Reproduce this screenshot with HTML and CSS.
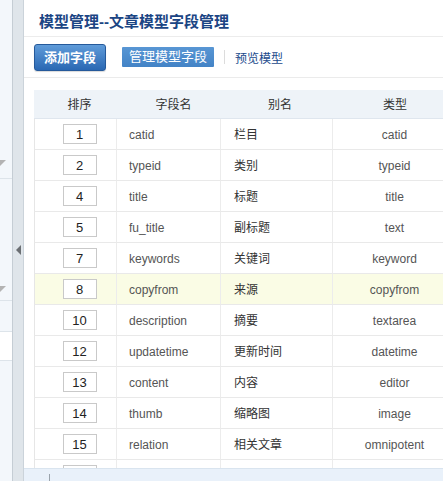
FILE: index.html
```html
<!DOCTYPE html>
<html lang="zh-CN">
<head>
<meta charset="utf-8">
<title>模型管理--文章模型字段管理</title>
<link rel="stylesheet" href="styles.css">
</head>
<body>
<div class="app">
  <aside class="side">
    <div class="sec sec1"><span class="tri"></span></div>
    <div class="sec sec2"><span class="tri"></span></div>
    <div class="sec sec3"></div>
    <div class="sec sec4"></div>
    <div class="sec sec5"></div>
  </aside>
  <div class="splitter"><span class="arrow"></span></div>
  <main class="main">
    <h1 class="title">模型管理--文章模型字段管理</h1>
    <div class="toolbar">
      <a class="btn-primary">添加字段</a>
      <a class="btn-tab">管理模型字段</a>
      <span class="sep"></span>
      <a class="link">预览模型</a>
    </div>
    <div class="table-wrap">
      <table class="fields">
        <colgroup>
          <col class="c1"><col class="c2"><col class="c3"><col class="c4">
        </colgroup>
        <thead>
          <tr><th class="h1">排序</th><th class="h2">字段名</th><th class="h3">别名</th><th class="h4">类型</th></tr>
        </thead>
        <tbody>
          <tr><td class="ord"><input class="order" value="1"></td><td class="name">catid</td><td class="alias">栏目</td><td class="type">catid</td></tr>
          <tr><td class="ord"><input class="order" value="2"></td><td class="name">typeid</td><td class="alias">类别</td><td class="type">typeid</td></tr>
          <tr><td class="ord"><input class="order" value="4"></td><td class="name">title</td><td class="alias">标题</td><td class="type">title</td></tr>
          <tr><td class="ord"><input class="order" value="5"></td><td class="name">fu_title</td><td class="alias">副标题</td><td class="type">text</td></tr>
          <tr><td class="ord"><input class="order" value="7"></td><td class="name">keywords</td><td class="alias">关键词</td><td class="type">keyword</td></tr>
          <tr class="hl"><td class="ord"><input class="order" value="8"></td><td class="name">copyfrom</td><td class="alias">来源</td><td class="type">copyfrom</td></tr>
          <tr><td class="ord"><input class="order" value="10"></td><td class="name">description</td><td class="alias">摘要</td><td class="type">textarea</td></tr>
          <tr><td class="ord"><input class="order" value="12"></td><td class="name">updatetime</td><td class="alias">更新时间</td><td class="type">datetime</td></tr>
          <tr><td class="ord"><input class="order" value="13"></td><td class="name">content</td><td class="alias">内容</td><td class="type">editor</td></tr>
          <tr><td class="ord"><input class="order" value="14"></td><td class="name">thumb</td><td class="alias">缩略图</td><td class="type">image</td></tr>
          <tr><td class="ord"><input class="order" value="15"></td><td class="name">relation</td><td class="alias">相关文章</td><td class="type">omnipotent</td></tr>
          <tr><td class="ord"><input class="order" value=""></td><td class="name"></td><td class="alias"></td><td class="type"></td></tr>
        </tbody>
      </table>
    </div>
    <div class="footer"><span class="tick"></span></div>
  </main>
</div>
</body>
</html>
```

FILE: styles.css
```css
html, body {
  margin: 0;
  padding: 0;
  height: 100%;
  overflow: hidden;
}
body {
  font-family: "Liberation Sans", "Noto Sans CJK SC", sans-serif;
  font-size: 12px;
  color: #444;
  background: #fff;
}
.app {
  display: flex;
  height: 481px;
}

/* left collapsed panel */
.side {
  width: 12px;
  flex: none;
  background: #f3f7fb;
  border-right: 1px solid #c5cdd4;
  display: flex;
  flex-direction: column;
  overflow: hidden;
}
.sec {
  box-sizing: border-box;
  flex: none;
  display: flex;
  flex-direction: column;
  justify-content: flex-end;
}
.sec1 { height: 179px; border-bottom: 1px solid #dde4ea; padding-bottom: 12px; }
.sec2 { height: 122px; border-bottom: 1px solid #dde4ea; padding-bottom: 8px; }
.sec3 { height: 31px; border-bottom: 1px solid #dde4ea; }
.sec4 { height: 29px; background: #fff; border-bottom: 1px solid #dde4ea; }
.sec5 { flex: 1; }
.tri {
  width: 0;
  height: 0;
  margin-left: -6px;
  border-left: 6px solid transparent;
  border-right: 6px solid transparent;
  border-top: 6px solid #b3b3b3;
}

/* splitter */
.splitter {
  width: 11px;
  flex: none;
  background: #dfe5ea;
  border-right: 1px solid #cbd3da;
  display: flex;
  align-items: center;
  justify-content: center;
  padding-top: 19px;
  box-sizing: border-box;
}
.arrow {
  width: 0;
  height: 0;
  border-top: 5px solid transparent;
  border-bottom: 5px solid transparent;
  border-right: 5px solid #6b6f73;
}

/* main */
.main {
  flex: 1;
  min-width: 0;
  display: flex;
  flex-direction: column;
  overflow: hidden;
  background: #fff;
}
.title {
  margin: 0;
  box-sizing: border-box;
  height: 37px;
  padding: 12px 0 0 15px;
  line-height: 20px;
  font-size: 15px;
  font-weight: bold;
  color: #1b4584;
  border-bottom: 1px solid #ececec;
  white-space: nowrap;
}
.toolbar {
  box-sizing: border-box;
  height: 41px;
  flex: none;
  display: flex;
  align-items: center;
  padding-left: 10px;
  border-bottom: 1px solid #ebebeb;
}
.btn-primary {
  box-sizing: border-box;
  width: 72px;
  height: 27px;
  line-height: 25px;
  text-align: center;
  color: #fff;
  font-size: 13px;
  font-weight: bold;
  background: linear-gradient(#5f9bd9, #2a68b3);
  border: 1px solid #25599a;
  border-radius: 3px;
  box-shadow: 0 1px 1px rgba(0,0,0,0.15);
}
.btn-tab {
  margin-left: 16px;
  box-sizing: border-box;
  width: 92px;
  height: 20px;
  line-height: 20px;
  text-align: center;
  color: #fff;
  font-size: 13px;
  background: linear-gradient(#5896d4, #4383c6);
  border-radius: 1px;
}
.sep {
  width: 1px;
  height: 14px;
  margin-left: 10px;
  background: #dcdcdc;
}
.link {
  margin-left: 10px;
  font-size: 12px;
  color: #1a4a8c;
}

.table-wrap {
  flex: 1;
  min-height: 0;
  overflow: hidden;
  padding: 12px 0 0 10px;
}
.fields {
  border-collapse: separate;
  border-spacing: 0;
  table-layout: fixed;
  width: 423px;
}
.c1 { width: 83px; }
.c2 { width: 104px; }
.c3 { width: 112px; }
.c4 { width: 124px; }
.fields th {
  height: 26px;
  padding: 2px 0 0 0;
  line-height: 16px;
  background: #eef3f8;
  border-bottom: 1px solid #dfe6ee;
  font-weight: normal;
  color: #333;
  font-size: 12px;
  text-align: center;
}
.fields th.h1 { padding-left: 8px; }
.fields th.h2 { padding-left: 9px; }
.fields th.h3 { padding-left: 6px; }
.fields td {
  height: 28px;
  padding: 2px 0 0 0;
  line-height: 16px;
  border-bottom: 1px solid #e9e9e9;
  border-right: 1px solid #ececec;
  color: #555;
  white-space: nowrap;
}
.fields td.ord {
  height: 30px;
  padding: 0 0 0 8px;
  border-left: 1px solid #e6e6e6;
  text-align: center;
}
.fields td.name { padding-left: 12px; }
.fields td.alias { padding-left: 13px; color: #333; }
.fields td.type { text-align: center; }
.fields tr.hl td { background: #fafce5; }
.order {
  box-sizing: border-box;
  width: 34px;
  height: 20px;
  margin: 0;
  padding: 0;
  border: 1px solid #c9c9c9;
  background: #fff;
  text-align: center;
  font-family: "Liberation Sans", sans-serif;
  font-size: 13px;
  color: #222;
  vertical-align: middle;
}

.footer {
  flex: none;
  height: 13px;
  box-sizing: border-box;
  background: #e9f1fa;
  border-top: 1px solid #d9e4ef;
  display: flex;
}
.tick {
  width: 1px;
  height: 7px;
  margin: 5px 0 0 25px;
  background: #9aa3ab;
}
```
